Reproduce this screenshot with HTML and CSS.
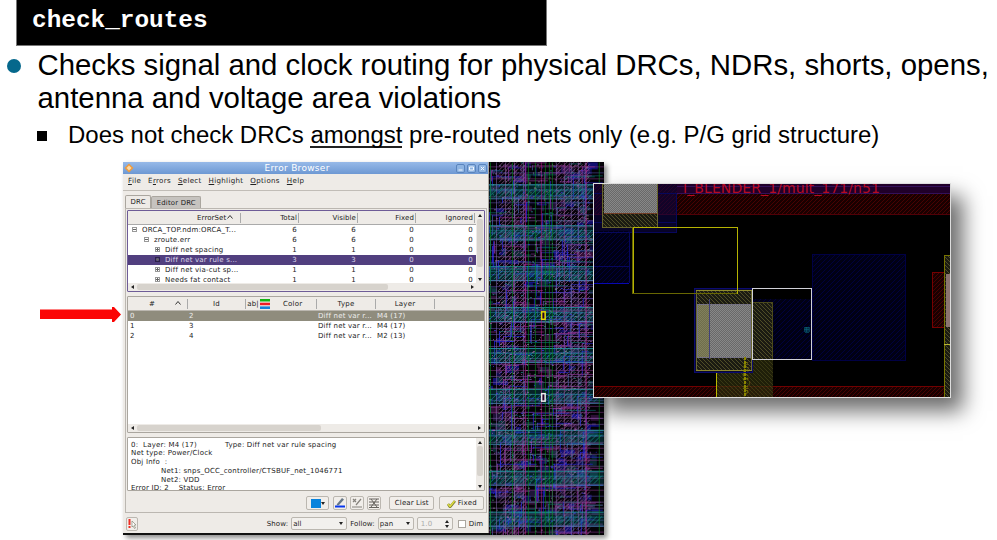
FILE: index.html
```html
<!DOCTYPE html>
<html lang="en">
<head>
<meta charset="utf-8">
<title>check_routes</title>
<link rel="stylesheet" href="styles.css">
</head>
<body>
<main class="slide">
  <h1 class="title">check_routes</h1>
  <ul class="points">
    <li class="point"><span class="dot"></span><p>Checks signal and clock routing for physical DRCs, NDRs, shorts, opens,<br>antenna and voltage area violations</p></li>
    <li class="subpoint"><span class="square"></span><p>Does not check DRCs <span class="under">amongst</span> pre-routed nets only (e.g. P/G grid structure)</p></li>
  </ul>
  <section class="figure">
    <svg class="arrow" width="82" height="18" viewBox="0 0 82 18"><path d="M0 4.500h72V2h2l7 7.500-7 7.500h-2v-3H0z" fill="#fb0505"/></svg>
    <div class="capture">
      <div class="window">
        <header class="titlebar">
          <svg width="10" height="10" viewBox="0 0 10 10"><path d="M5 .5 9.5 5 5 9.5.5 5z" fill="#ef9a3c"/><path d="M5 2.5 7.5 5 5 7.5 2.5 5z" fill="#fbd9a6"/></svg>
          <span class="wtitle">Error Browser</span>
          <svg width="32" height="9" viewBox="0 0 32 9" fill="none" stroke="#5a84bd"><rect x=".5" y=".5" width="8" height="8" rx="1.500" fill="#8eb4e2"/><rect x="11.500" y=".5" width="8" height="8" rx="1.500" fill="#8eb4e2"/><rect x="22.500" y=".5" width="8" height="8" rx="1.500" fill="#8eb4e2"/><path d="M2.500 6h4M13.500 3h4v3h-4zM24.800 2.800l3.400 3.400m0-3.400-3.400 3.400" stroke="#f3f7fd"/></svg>
        </header>
        <nav class="menu"><span><u>F</u>ile</span><span>E<u>r</u>rors</span><span><u>S</u>elect</span><span><u>H</u>ighlight</span><span><u>O</u>ptions</span><span><u>H</u>elp</span></nav>
        <div class="tabs"><span class="tab on">DRC</span><span class="tab">Editor DRC</span></div>
        <div class="pane">
          <div class="tree box">
            <div class="treebody">
              <div class="trow thead"><span>ErrorSet<svg width="8" height="6" viewBox="0 0 8 6"><path d="M1.500 4.500 4 1.500l2.500 3" fill="none" stroke="#333"/></svg></span><span>Total</span><span>Visible</span><span>Fixed</span><span>Ignored</span></div>
              <div class="trow l0"><span><i class="ex minus"></i>ORCA_TOP.ndm:ORCA_T...</span><span>6</span><span>6</span><span>0</span><span>0</span></div>
              <div class="trow l1"><span><i class="ex minus"></i>zroute.err</span><span>6</span><span>6</span><span>0</span><span>0</span></div>
              <div class="trow l2"><span><i class="ex"></i>Diff net spacing</span><span>1</span><span>1</span><span>0</span><span>0</span></div>
              <div class="trow l2 sel"><span><i class="ex"></i>Diff net var rule s...</span><span>3</span><span>3</span><span>0</span><span>0</span></div>
              <div class="trow l2"><span><i class="ex"></i>Diff net via-cut sp...</span><span>1</span><span>1</span><span>0</span><span>0</span></div>
              <div class="trow l2"><span><i class="ex"></i>Needs fat contact</span><span>1</span><span>1</span><span>0</span><span>0</span></div>
            </div>
            <div class="vscroll"><i class="up"></i><b class="thumb tall"></b><i class="down"></i></div>
            <div class="hscroll"><i class="left"></i><b class="thumb wide"></b><i class="right"></i></div>
          </div>
          <div class="list box">
            <div class="lrow lhead"><span>#<svg width="8" height="6" viewBox="0 0 8 6"><path d="M1.500 4.500 4 1.500l2.500 3" fill="none" stroke="#333"/></svg></span><span>Id</span><span class="ab">ab|</span><span class="color"><svg width="10" height="10" viewBox="0 0 10 10"><path d="M0 0h10v2.500H0z" fill="#12b212"/><path d="M0 3.700h10v2.500H0z" fill="#ec1c24"/><path d="M0 7.400h10V10H0z" fill="#1380d8"/></svg>Color</span><span>Type</span><span>Layer</span></div>
            <div class="lrow picked"><span>0</span><span>2</span><span></span><span></span><span>Diff net var r...</span><span>M4 (17)</span></div>
            <div class="lrow"><span>1</span><span>3</span><span></span><span></span><span>Diff net var r...</span><span>M4 (17)</span></div>
            <div class="lrow"><span>2</span><span>4</span><span></span><span></span><span>Diff net var r...</span><span>M2 (13)</span></div>
            <div class="hscroll bottom"><i class="left"></i><b class="thumb half"></b><i class="right"></i></div>
          </div>
          <div class="info box">
            <div class="infotext"><p><span class="lead">0:&nbsp; Layer: M4 (17)</span>Type: Diff net var rule spacing</p><p>Net type: Power/Clock</p><p>Obj Info&nbsp; :</p><p class="ind">Net1: snps_OCC_controller/CTSBUF_net_1046771</p><p class="ind">Net2: VDD</p><p>Error ID: 2 &nbsp;&nbsp; Status: Error</p></div>
            <div class="vscroll"><i class="up"></i><b class="thumb mid"></b><i class="down"></i></div>
          </div>
          <div class="tools">
            <span class="btn swatch"><b></b><i class="down"></i></span>
            <span class="btn sq"><svg width="12" height="12" viewBox="0 0 12 12"><path d="M3 7 8 1l2 1.500L5 8l-2.500.5z" fill="#678"/><path d="M1 9.500h10" stroke="#0838ee" stroke-width="2"/></svg></span>
            <span class="btn sq"><svg width="12" height="12" viewBox="0 0 12 12" fill="none" stroke="#85827c"><path d="M2 2l3 3m0-3L2 5M5 8l5-6M1 10h10" stroke-width="1.200"/></svg></span>
            <span class="btn sq"><svg width="12" height="12" viewBox="0 0 12 12" fill="none" stroke="#66635e"><path d="M1 2h10M1 5h10M1 8h10M1 10.500h10M3 2l6 8M9 2l-6 8"/></svg></span>
            <span class="btn clear">Clear List</span>
            <span class="btn fixed"><svg width="9" height="9" viewBox="0 0 9 9"><path d="m1 5 2 3 5-6" fill="none" stroke="#777a30" stroke-width="2.600"/><path d="m1 5 2 2.500L7.500 2" fill="none" stroke="#dddc40" stroke-width="1.500"/></svg>Fixed</span>
          </div>
        </div>
        <footer class="foot">
          <span class="btn alert"><svg width="10" height="11" viewBox="0 0 10 11"><path d="M2.500 1v6M2.500 8v2" stroke="#ef2e24" stroke-width="2"/><path d="m5 3 4 4-2 .2L8.500 10l-1 .5L6 8 5 9z" fill="#fff" stroke="#887" stroke-width=".7"/></svg></span>
          <span class="lab show">Show:</span><span class="select all">all<i class="down"></i></span>
          <span class="lab follow">Follow:</span><span class="select pan">pan<i class="down"></i></span>
          <span class="select spin">1.0<em><i class="up"></i><i class="down"></i></em></span>
          <span class="check"></span><span class="lab">Dim</span>
        </footer>
      </div>
      <svg class="routes" id="routes" width="115" height="373" viewBox="0 0 115 373"></svg>
    </div>
    <svg class="inset" width="356" height="213" viewBox="594 184 356 213" shape-rendering="crispEdges">
      <defs>
        <pattern id="hr" width="4" height="4" patternUnits="userSpaceOnUse"><rect width="4" height="4" fill="#190000"/><path d="M0 4 4 0" stroke="#480202"/></pattern>
        <pattern id="hb" width="5" height="5" patternUnits="userSpaceOnUse"><rect width="5" height="5" fill="#000014"/><path d="M0 5 5 0" stroke="#00003c"/></pattern>
        <pattern id="hy" width="4" height="4" patternUnits="userSpaceOnUse"><rect width="4" height="4" fill="#1b1b12"/><path d="M0 0 4 4" stroke="#4f4d27"/></pattern>
        <pattern id="hg" width="2" height="2" patternUnits="userSpaceOnUse"><rect width="2" height="2" fill="#696969"/><path d="M0 0h1v1H0zM1 1h1v1H1z" fill="#888"/></pattern>
      </defs>
      <rect x="594" y="184" width="357" height="213" fill="#000"/>
      <rect x="594" y="184" width="357" height="31" fill="url(#hr)"/>
      <path d="M594 214.500h357" stroke="#500007"/>
      <rect x="677" y="184" width="274" height="10" fill="#20002a"/>
      <path d="M677 186.500h274M677 193.500h274" stroke="#33105a"/>
      <rect x="594" y="184" width="83" height="48" fill="#0c0648" opacity=".55"/>
      <rect x="594" y="231" width="35" height="52" fill="url(#hb)"/>
      <path d="M594 193.500h83M594 222.500h83M676.500 193v39M594 232.500h83M629.500 232v51M594 266.500h35" fill="none" stroke="#07075c"/>
      <path d="M594 283.500h35" stroke="#0808b2"/>
      <rect x="602.500" y="184" width="55" height="43" fill="url(#hy)" stroke="#68652c"/>
      <rect x="604" y="184" width="53" height="29" fill="url(#hg)"/>
      <path d="M604 213.500h53" stroke="#703c24"/>
      <text x="683" y="193" class="net" textLength="197">I_BLENDER_1/mult_171/n51</text>
      <rect x="812" y="254" width="93" height="106" fill="url(#hb)" stroke="#000044"/>
      <rect x="752" y="299" width="60" height="61" fill="url(#hb)"/>
      <rect x="594" y="386" width="357" height="11" fill="url(#hr)"/>
      <path d="M594 386.500h357" stroke="#710000"/>
      <rect x="716" y="356" width="57" height="41" fill="#4b4b00" opacity=".45"/>
      <rect x="716" y="356" width="57" height="41" fill="url(#hy)" opacity=".5"/>
      <path d="M716.500 357v40" stroke="#bbb900"/>
      <rect x="752" y="302" width="20.500" height="57" fill="url(#hy)" stroke="#4b491b"/>
      <rect x="694.500" y="288.500" width="58" height="84" fill="#090930" stroke="#0b0b70"/>
      <rect x="696.500" y="290.500" width="55" height="80" fill="url(#hy)" stroke="#6b6930"/>
      <path d="M696 290.500h56M696 370.500h56" stroke="#8f8b2e"/>
      <rect x="697" y="304" width="53" height="53" fill="url(#hg)"/>
      <rect x="697" y="304" width="12" height="53" fill="#77751f" opacity=".4"/>
      <rect x="697" y="304" width="53" height="53" fill="none" stroke="#747183"/>
      <path d="M709.500 299v60" stroke="#414179"/>
      <path d="M744.500 357v40" stroke="#8b8600" stroke-width="2" stroke-dasharray="3 1"/>
      <text transform="translate(748 394) rotate(-90)" class="tiny">ult_171/n</text>
      <rect x="633.500" y="227.500" width="104" height="65.500" fill="none" stroke="#b5b302"/>
      <path d="M632.500 227v66h104" fill="none" stroke="#686702"/>
      <rect x="752.500" y="288.500" width="59" height="71" fill="none" stroke="#d1d1d8"/>
      <path d="M804.500 327h4.500v5h-4.500zM804 329.500h5M806.500 327v5" fill="#042c48" stroke="#086373" stroke-width=".6"/>
      <rect x="932.500" y="272.500" width="18" height="55" fill="url(#hr)" stroke="#760000"/>
      <rect x="944.500" y="255.500" width="7" height="142" fill="url(#hy)" stroke="#777400"/>
      <rect x="946" y="274" width="5" height="53" fill="#8a7470"/>
      <path d="M944 344.500h7" stroke="#b6b433"/>
    </svg>
  </section>
</main>
<script src="routes.js"></script>
</body>
</html>
```
FILE: styles.css
```css
* { box-sizing: border-box; }
body { margin: 0; width: 997px; height: 540px; overflow: hidden; background: #fff; color: #000; font-family: "Liberation Sans", Arial, sans-serif; }
p, ul, h1 { margin: 0; padding: 0; }
.slide { height: 540px; display: flex; flex-direction: column; }
.title { width: 531px; height: 46px; margin-left: 16px; padding: 7px 0 0 15px; background: #000; color: #fff; border: 1px solid #777; border-top: 0; font: bold 24.4px/28px "Liberation Mono", monospace; }
.points { list-style: none; height: 116px; }
.point, .subpoint { display: flex; white-space: nowrap; }
.point { font-size: 29.36px; line-height: 33px; padding: 2px 0 0 7px; }
.dot { width: 14px; height: 14px; border-radius: 50%; background: #05688c; margin: 11px 16.500px 0 0; }
.subpoint { font-size: 23.97px; line-height: 30px; padding: 6px 0 0 37px; }
.square { width: 10px; height: 10px; background: #000; margin: 11px 21px 0 0; }
.under { display: inline-block; height: 28px; border-bottom: 2px solid #222; }

.figure { position: relative; display: flex; height: 378px; }
.arrow { margin: 143px 1px 0 40px; }
.capture { display: flex; width: 481px; height: 373px; background: #111; box-shadow: 3px 3px 5px rgba(0,0,0,.45); }
.routes { display: block; background: #050208; }
.inset { position: absolute; left: 593px; top: 21px; border: 1px solid #ddd; box-sizing: content-box; box-shadow: 12px 13px 20px rgba(0,0,0,.58); }
.net { font: 14px "DejaVu Sans", sans-serif; fill: #b60b22; }
.tiny { font: 7px "DejaVu Sans", sans-serif; fill: #8f8a00; }

.window { width: 367px; height: 371px; background: #eeebe7; border-right: 1px solid #aaa69e; font: 7px/10px "DejaVu Sans", sans-serif; letter-spacing: .2px; color: #222; white-space: nowrap; display: flex; flex-direction: column; }
.titlebar { height: 12px; background: linear-gradient(#96b9e8, #6d98d3); display: flex; justify-content: space-between; align-items: center; padding: 0 0 0 1px; }
.wtitle { color: #fff; font-size: 9px; letter-spacing: .3px; margin-left: 4px; }
.menu { height: 17px; border-bottom: 1px solid #c1bdb7; padding: 2px 0 0 5px; display: flex; gap: 7px; font-size: 7.1px; letter-spacing: .3px; }
.menu u { text-underline-offset: 1px; text-decoration-thickness: 1px; }
.tabs { display: flex; align-items: flex-end; height: 17px; padding-left: 2px; }
.tab { height: 12px; background: #c6c3bf; border: 1px solid #aaa69f; border-bottom: 0; padding: 1px 4.500px 0; border-radius: 2px 2px 0 0; font-size: 6.9px; }
.tab.on { height: 13px; background: #eeebe7; }
.pane { height: 305px; margin: 0 1px 0 2px; border: 1px solid #bbb7b1; padding: 1px 1px 0; }
.box { background: #fff; border: 1px solid #aaa69f; border-radius: 1px; overflow: hidden; }
.tree { height: 82px; border-color: #6e5c97; display: grid; grid-template: 72px 8px / 1fr 8px; }
.treebody { overflow: hidden; }
.trow { display: grid; grid-template-columns: 113px 58px 59px 58px 59px; height: 10px; width: 352px; }
.trow > span { text-align: right; padding-right: 2px; }
.trow > span:first-child { text-align: left; position: relative; }
.thead { height: 14px; line-height: 14px; background: #eeebe7; border-bottom: 1px solid #aaa; letter-spacing: .1px; }
.thead > span { border-right: 1px solid #aaa; height: 10px; margin-top: 2px; line-height: 10px; padding-right: 1px; }
.thead > span:first-child { padding-left: 69px; }
.l0 > span:first-child { padding-left: 15px; }
.l1 > span:first-child { padding-left: 27px; }
.l2 > span:first-child { padding-left: 38px; }
.ex { display: inline-block; width: 5px; height: 5px; border: 1px solid #999; margin: 0 5px 1px -11px; background: linear-gradient(#666, #666) 50% 50% / 1px 3px no-repeat, linear-gradient(#666, #666) 50% 50% / 3px 1px no-repeat; vertical-align: middle; }
.ex.minus { background-size: 3px 1px; }
.sel { background: #513f7f; color: #ddd6e9; }
.sel .ex { border-color: #2c2149; }
.vscroll { background: #eeebe7; display: flex; flex-direction: column; align-items: center; justify-content: space-between; padding: 3px 0 2px; }
.hscroll { background: #eeebe7; display: flex; align-items: center; padding: 0 3px; grid-column: 1 / 3; height: 8px; }
.hscroll .right { margin-left: auto; }
.tree .hscroll .right { margin-right: 7px; }
.thumb { background: #d7d3cd; border-radius: 2px; width: 6px; }
.tall { height: 48px; margin-bottom: 10px; } .mid { height: 30px; margin-bottom: 7px; }
.hscroll .thumb { height: 6px; margin-left: 3px; }
.hscroll .wide { width: 251px; } .hscroll .half { width: 184px; }
.up, .down, .left, .right { width: 0; height: 0; border: 2px solid transparent; flex: none; }
.up { border-bottom: 3px solid #222; border-top: 0; }
.down { border-top: 3px solid #222; border-bottom: 0; }
.left { border-right: 3px solid #222; border-left: 0; }
.right { border-left: 3px solid #222; border-right: 0; }

.list { height: 137px; margin-top: 4px; display: flex; flex-direction: column; }
.lrow { display: grid; grid-template-columns: 59px 58px 14px 57px 59px 1fr; height: 10px; padding-left: 1px; flex: none; }
.lrow > span { padding-left: 1px; }
.lhead { background: #eeebe7; height: 14px; border-bottom: 1px solid #bbb7b0; padding-top: 2px; }
.lhead > span { border-right: 1px solid #aaa; height: 10px; text-align: center; padding: 0; }
.lhead > span:first-child { padding-left: 15px; }
.lhead > span:first-child svg { margin-left: 19px; }
.lhead .ab { border: 0; }
.lhead .color { display: flex; gap: 13px; }
.lhead > span:last-child { width: 59px; }
.picked { background: #8f8c7d; color: #eee; }
.bottom { margin-top: auto; }
.info { height: 54px; margin-top: 4px; display: grid; grid-template-columns: 1fr 8px; }
.infotext { padding: 2.500px 3px 0; font-size: 7px; line-height: 8.8px; overflow: hidden; }
.lead { display: inline-block; width: 94px; }
.ind { padding-left: 30px; }
.tools { display: flex; justify-content: flex-end; margin-top: 5px; padding-right: 1px; }
.btn { height: 14px; border: 1px solid #bbb7b0; border-radius: 2px; display: flex; align-items: center; justify-content: center; background: #f1eeea; }
.swatch { width: 23px; margin-right: 4px; }
.swatch b { width: 10px; height: 9px; background: #0783dd; }
.sq { width: 14px; margin-right: 3px; }
.clear { width: 45px; margin: 0 5px; letter-spacing: .1px; }
.fixed { width: 45px; gap: 2px; }
.foot { display: flex; align-items: center; height: 20px; padding: 1px 5px 0 3px; letter-spacing: .1px; }
.alert { width: 12px; }
.show { margin-left: auto; }
.select { border: 1px solid #bbb7b0; height: 13px; border-radius: 2px; display: flex; align-items: center; justify-content: space-between; padding: 0 3px 0 1px; background: #f2f0ed; margin-left: 3px; }
.all { width: 56px; } .pan { width: 36px; }
.follow { margin-left: 3px; }
.spin { width: 36px; color: #aaa; padding-left: 3px; }
.spin em { display: flex; flex-direction: column; gap: 2px; }
.check { width: 8px; height: 8px; border: 1px solid #aaa69f; background: #fff; margin: 0 3px 0 5px; }
```
FILE: routes.js
```js
// Draws the dense routing view: tracks, vias and power straps.
(function () {
  var svg = document.getElementById('routes'), ns = 'http://www.w3.org/2000/svg', seed = 71;
  function rnd() { seed = (seed * 16807) % 2147483647; return seed / 2147483647; }
  function pick(a) { return a[Math.floor(rnd() * a.length)]; }
  function rect(x, y, w, h, c, o) {
    var r = document.createElementNS(ns, 'rect');
    r.setAttribute('x', x); r.setAttribute('y', y); r.setAttribute('width', w); r.setAttribute('height', h);
    r.setAttribute('fill', c); r.setAttribute('opacity', o || 1); svg.appendChild(r);
  }
  function line(d, c, o) {
    var p = document.createElementNS(ns, 'path');
    p.setAttribute('d', d); p.setAttribute('stroke', c); p.setAttribute('fill', 'none'); p.setAttribute('opacity', o); svg.appendChild(p);
  }
  var i, x, y, k;
  for (i = 0; i < 650; i++) {
    x = Math.floor(rnd() * 104); y = Math.floor(rnd() * 370);
    if (x > 38 && x < 67 && rnd() < 0.4) continue;
    rect(x, y, 2 + Math.floor(rnd() * 9), 2 + Math.floor(rnd() * 6), pick(['#4b1c58', '#15157c', '#541a54', '#302059', '#124450', '#1818b4']), 0.6);
  }
  // Diagonal fill of the two macro columns
  [[10, 38], [67, 96]].forEach(function (b) {
    for (y = -6; y < 373; y += 4) {
      for (k = b[0]; k < b[1]; k += 7) line('M' + k + ' ' + (y + 6) + 'l6 -6', '#a870aa', 0.6);
    }
  });
  for (i = 0; i < 210; i++) {
    x = Math.floor(rnd() * 98); y = Math.floor(rnd() * 372);
    rect(x, y, Math.min(10 + Math.floor(rnd() * 32), 114 - x), 1, pick(['#2021d0', '#8a2a8b', '#2a2abe', '#93359a', '#0d6868']), 0.7);
    rect(x, y, 1, 5 + Math.floor(rnd() * 25), pick(['#2929f0', '#2626d5', '#8c2e95', '#405fa0']), 0.75);
  }
  for (i = 0; i < 34; i++) rect(pick([3, 26, 40, 60, 96]) + Math.floor(rnd() * 5), Math.floor(rnd() * 360), 4 + Math.floor(rnd() * 6), 4 + Math.floor(rnd() * 8), '#000', 0.8);
  for (y = 4; y < 373; y += 6) rect(0, y, 115, 1, pick(['#75549a', '#5046a0', '#7c347f']), 0.6);
  for (y = 22; y < 373; y += 41) {
    rect(0, y, 115, 14, '#057174', 0.3);
    rect(0, y, 115, 1, '#259eaa', 0.8); rect(0, y + 5, 115, 1, '#207c99', 0.6); rect(0, y + 14, 115, 1, '#4b8fc2', 0.8);
    for (x = 0; x < 110; x += 5) line('M' + x + ' ' + (y + 13) + 'l8 -8', '#1ba09a', 0.6);
  }
  [7, 16, 25, 34, 67, 75, 82, 89, 96].forEach(function (v) { rect(v, 0, 1, 373, pick(['#9a6ba8', '#7d62a5', '#93468b']), 0.6); });
  [1, 23, 39, 46, 56, 60, 63, 110].forEach(function (v) { rect(v, 0, 1, 373, '#07931c', 0.6); });
  [36, 52, 97].forEach(function (v) { rect(v, 0, 1, 373, '#b81c80', 0.6); });
  for (i = 0; i < 950; i++) rect(Math.floor(rnd() * 102), Math.floor(rnd() * 372), 1 + Math.floor(rnd() * 2), 1, pick(['#8d76b5', '#888', '#268f95', '#3d3df2', '#b260b4', '#48866a']), 0.7);
  function marker(y, c) { rect(52, y, 5, 9, c); rect(53.500, y + 1.500, 2, 6, '#24002a'); }
  marker(149, '#e8d905'); marker(231, '#ededed');
}());
```
